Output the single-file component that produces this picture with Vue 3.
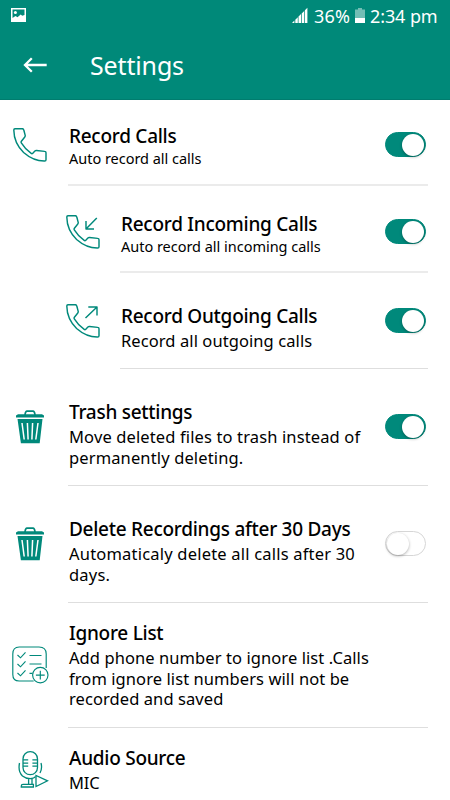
<script setup>
import { ref } from 'vue'

const rows = ref([
  { id: 'record', icon: 'phone', title: 'Record Calls', lines: ['Auto record all calls'], on: true },
  { id: 'incoming', icon: 'incoming', title: 'Record Incoming Calls', lines: ['Auto record all incoming calls'], on: true, nested: true },
  { id: 'outgoing', icon: 'outgoing', title: 'Record Outgoing Calls', lines: ['Record all outgoing calls'], on: true, nested: true },
  { id: 'trash', icon: 'trash', title: 'Trash settings', lines: ['Move deleted files to trash instead of', 'permanently deleting.'], on: true },
  { id: 'delete', icon: 'trash', title: 'Delete Recordings after 30 Days', lines: ['Automaticaly delete all calls after 30', 'days.'], on: false },
  { id: 'ignore', icon: 'list', title: 'Ignore List', lines: ['Add phone number to ignore list .Calls', 'from ignore list numbers will not be', 'recorded and saved'] },
  { id: 'audio', icon: 'mic', title: 'Audio Source', lines: ['MIC'] },
])
</script>

<template>
  <div class="screen">
    <header class="top">
      <div class="status">
        <svg class="photo" width="15" height="14" viewBox="0 0 15 14">
          <path fill="#fff" fill-rule="evenodd" d="M0 0H15V14H0ZM1.5 1.5V10L4.5 8L6.5 9.2L9.7 6.4L11.2 7.7L13.5 7V1.5Z" />
          <circle cx="4.4" cy="4.5" r="1.5" fill="#fff" />
        </svg>
        <div class="status-right">
          <svg class="signal" width="16" height="16" viewBox="0 0 16 16" fill="#fff">
            <path d="M0 16L2.4 13.6V16ZM3.3 12.8L5.8 10.3V16H3.3ZM6.5 9.6L9 7.1V16H6.5ZM9.7 6.4L12.2 3.9V16H9.7ZM12.9 3.2L15.4 .7V16H12.9Z" />
          </svg>
          <span class="percent">36%</span>
          <svg class="battery" width="10" height="15" viewBox="0 0 10 15" fill="#fff">
            <path opacity=".45" d="M3 0H7V1.6H10V10H0V1.6H3Z" />
            <path d="M0 10H10V15H0Z" />
          </svg>
          <span class="time">2:34 pm</span>
        </div>
      </div>
      <div class="bar">
        <svg class="back" width="24" height="16" viewBox="0 0 24 16" fill="none" stroke="#fff" stroke-width="2.3">
          <path d="M8.8 1.2L2 8L8.8 14.8M2 8H23.7" />
        </svg>
        <h1>Settings</h1>
      </div>
    </header>
    <main>
      <section v-for="row in rows" :key="row.id" class="row" :class="[row.id, { nested: row.nested }]">
        <div class="icon">
          <svg v-if="['phone', 'incoming', 'outgoing'].includes(row.icon)" width="34" height="34" viewBox="0 0 34 34" fill="none" stroke="#00897b" stroke-width="1.45" stroke-linejoin="round" stroke-linecap="round">
            <path d="M2 .8L9.2 .7Q10.5 .7 10.8 2L12.2 7.4Q12.4 8.3 11.8 9L8.4 13.2Q7.8 14 8.3 14.8Q12.5 21.5 18.2 25.4Q19 26 19.8 25.2L21.9 23.1Q22.6 22.4 23.5 22.5L31.7 23.4Q33 23.5 33 24.8V31.7Q33 33 31.7 33Q20.5 33.2 10.6 24.5Q1 15.4 .8 2.1Q.8 .9 2 .8Z" />
            <path v-if="row.icon === 'incoming'" stroke-linecap="butt" d="M30.8 3L20 14M20 6V14H28" />
            <path v-if="row.icon === 'outgoing'" stroke-linecap="butt" d="M19.5 14L31 3M22.3 3H31V11.5" />
          </svg>
          <svg v-else-if="row.icon === 'trash'" width="28" height="34" viewBox="0 0 28 34">
            <path fill="none" stroke="#00897b" stroke-width="1.7" d="M9 5Q9.4 1.2 11 1.2H17Q18.6 1.2 19 5" />
            <path fill="#00897b" d="M2 4.2H26L28 5.6V7.5H0V5.6ZM1.5 9H26.5L23.7 33.2H4.9Z" />
            <path fill="none" stroke="#fff" stroke-width="1.5" d="M6 13L8.2 29.5M11.4 13L12.1 29.5M16.6 13L15.9 29.5M22 13L19.8 29.5" />
          </svg>
          <svg v-else-if="row.icon === 'list'" width="37" height="38" viewBox="0 0 37 38" fill="none" stroke="#00897b" stroke-width="1.15">
            <path d="M21.7 35H7.2Q.8 35 .8 28.5V8Q.8 1 7.2 1H27Q34.2 1 34.2 8V22" />
            <path d="M5.5 9L8.5 11.8L13.5 6.3M5.5 18L8.5 20.8L13.5 15.3M5.5 27L8.5 29.8L13.5 24.3M17.5 9.5H29.5M17.5 18H29.5M17.5 27.4H20.5" />
            <circle cx="28.3" cy="29.1" r="7.7" />
            <path d="M28.3 24.7V33.5M23.9 29.1H32.7" />
          </svg>
          <svg v-else width="31" height="37" viewBox="0 0 31 37" fill="none" stroke="#00897b" stroke-width="1.3">
            <rect x="5" y=".7" width="14.5" height="23" rx="7.2" />
            <path d="M1.5 12Q-.2 20.5 4.5 25Q7.5 27.6 12.2 27.6Q16.2 27.4 17.5 25.5M23 12Q24.5 17.5 22 22M5 8.9H10.2M5 12.1H10.2M5 15.2H10.2M14.4 8.9H19.5M14.4 12.1H19.5M14.4 15.2H19.5M10.6 27.5V33.2M14 27.3V33.2" />
            <path d="M3.3 36V35Q3.3 33.4 5 33.4H15.4V36Z" />
            <path d="M18 24.5V35.5L29.6 29.8Z" />
          </svg>
        </div>
        <div class="body">
          <div class="text">
            <h2>{{ row.title }}</h2>
            <p v-for="line in row.lines" :key="line">{{ line }}</p>
          </div>
          <button v-if="row.on !== undefined" class="switch" :class="{ on: row.on }" @click="row.on = !row.on"><i></i></button>
        </div>
      </section>
    </main>
  </div>
</template>

<style>
body { margin: 0; background: #fff; }
</style>

<style scoped>
* { box-sizing: border-box; }
.screen { width: 450px; height: 800px; overflow: hidden; background: #fff; color: #000; font-family: "Noto Sans", sans-serif; }
.top { height: 100px; background: #008979; color: #fff; border-bottom: 1px solid #007c6e; }
.status { height: 32px; display: flex; justify-content: space-between; padding: 0 13px 0 11px; }
.photo { margin-top: 8px; }
.status-right { display: flex; font-size: 18px; line-height: 32px; white-space: nowrap; }
.signal { margin: 7px 6px 0 0; }
.percent { width: 37px; letter-spacing: .15px; }
.battery { margin: 8px 5px 0 4px; }
.time { width: 67px; letter-spacing: -.1px; }
.bar { height: 67px; display: flex; padding-left: 23px; }
.back { margin-top: 25px; }
h1 { margin: 14px 0 0 43px; font-size: 25px; font-weight: 400; line-height: 38px; letter-spacing: -.15px; }
.row { display: flex; }
.icon { width: 68px; flex: none; padding: 0 0 0 13px; }
.icon svg { display: block; }
.nested { padding-left: 53px; }
.nested .icon { width: 67px; }
.body { flex: 1; display: flex; justify-content: space-between; margin-right: 22px; border-bottom: 1px solid #dedede; padding-left: 1px; }
.text { white-space: nowrap; }
h2 { margin: 0; font-size: 19px; line-height: 24px; font-weight: 500; letter-spacing: -.27px; }
p { margin: 0; font-size: 16.5px; line-height: 20.7px; letter-spacing: .08px; }
.switch { width: 41px; height: 25px; flex: none; margin: 0 2px 0 0; padding: 1px; border: 1px solid #d6d6d6; border-radius: 13px; background: #fff; display: flex; }
.switch i { width: 22px; height: 22px; margin: -.5px 0 0 0; border-radius: 50%; background: #fff; box-shadow: 0 1px 3px rgba(0,0,0,.32); }
.switch.on { background: #00897b; border-color: #00897b; justify-content: flex-end; }
.record { height: 86px; }
.record .body, .incoming .body { border-bottom: 2px solid #ebebeb; }
.record .icon { padding-top: 28px; }
.record .text { padding-top: 24px; }
.record .switch { margin-top: 32px; }
.record p, .incoming p { font-size: 14.5px; letter-spacing: -.02px; }
.incoming { height: 87px; }
.incoming .icon { padding-top: 29px; }
.incoming .text { padding-top: 26px; }
.incoming .switch { margin-top: 33px; }
.outgoing { height: 96px; }
.outgoing .icon { padding-top: 31px; }
.outgoing .text { padding-top: 31px; }
.outgoing .switch { margin-top: 35px; }
.trash { height: 117px; }
.trash .icon, .delete .icon { padding: 41px 0 0 16px; }
.trash .text, .delete .text { padding-top: 31px; }
.trash p { letter-spacing: .13px; }
h2 + p { margin-top: 3px; }
.record h2 + p, .incoming h2 + p { margin-top: 0; }
.trash .switch { margin-top: 45px; }
.delete { height: 117px; }
.delete p { letter-spacing: .2px; }
.delete .switch { margin-top: 45px; }
.ignore { height: 125px; }
.ignore .icon { padding: 43px 0 0 11.5px; }
.ignore .text { padding-top: 18px; }
.audio { height: 90px; }
.audio .body { border: 0; }
.audio .icon { padding: 23px 0 0 17.5px; }
.audio .text { padding-top: 18px; }
.audio p { letter-spacing: -.2px; }
</style>
